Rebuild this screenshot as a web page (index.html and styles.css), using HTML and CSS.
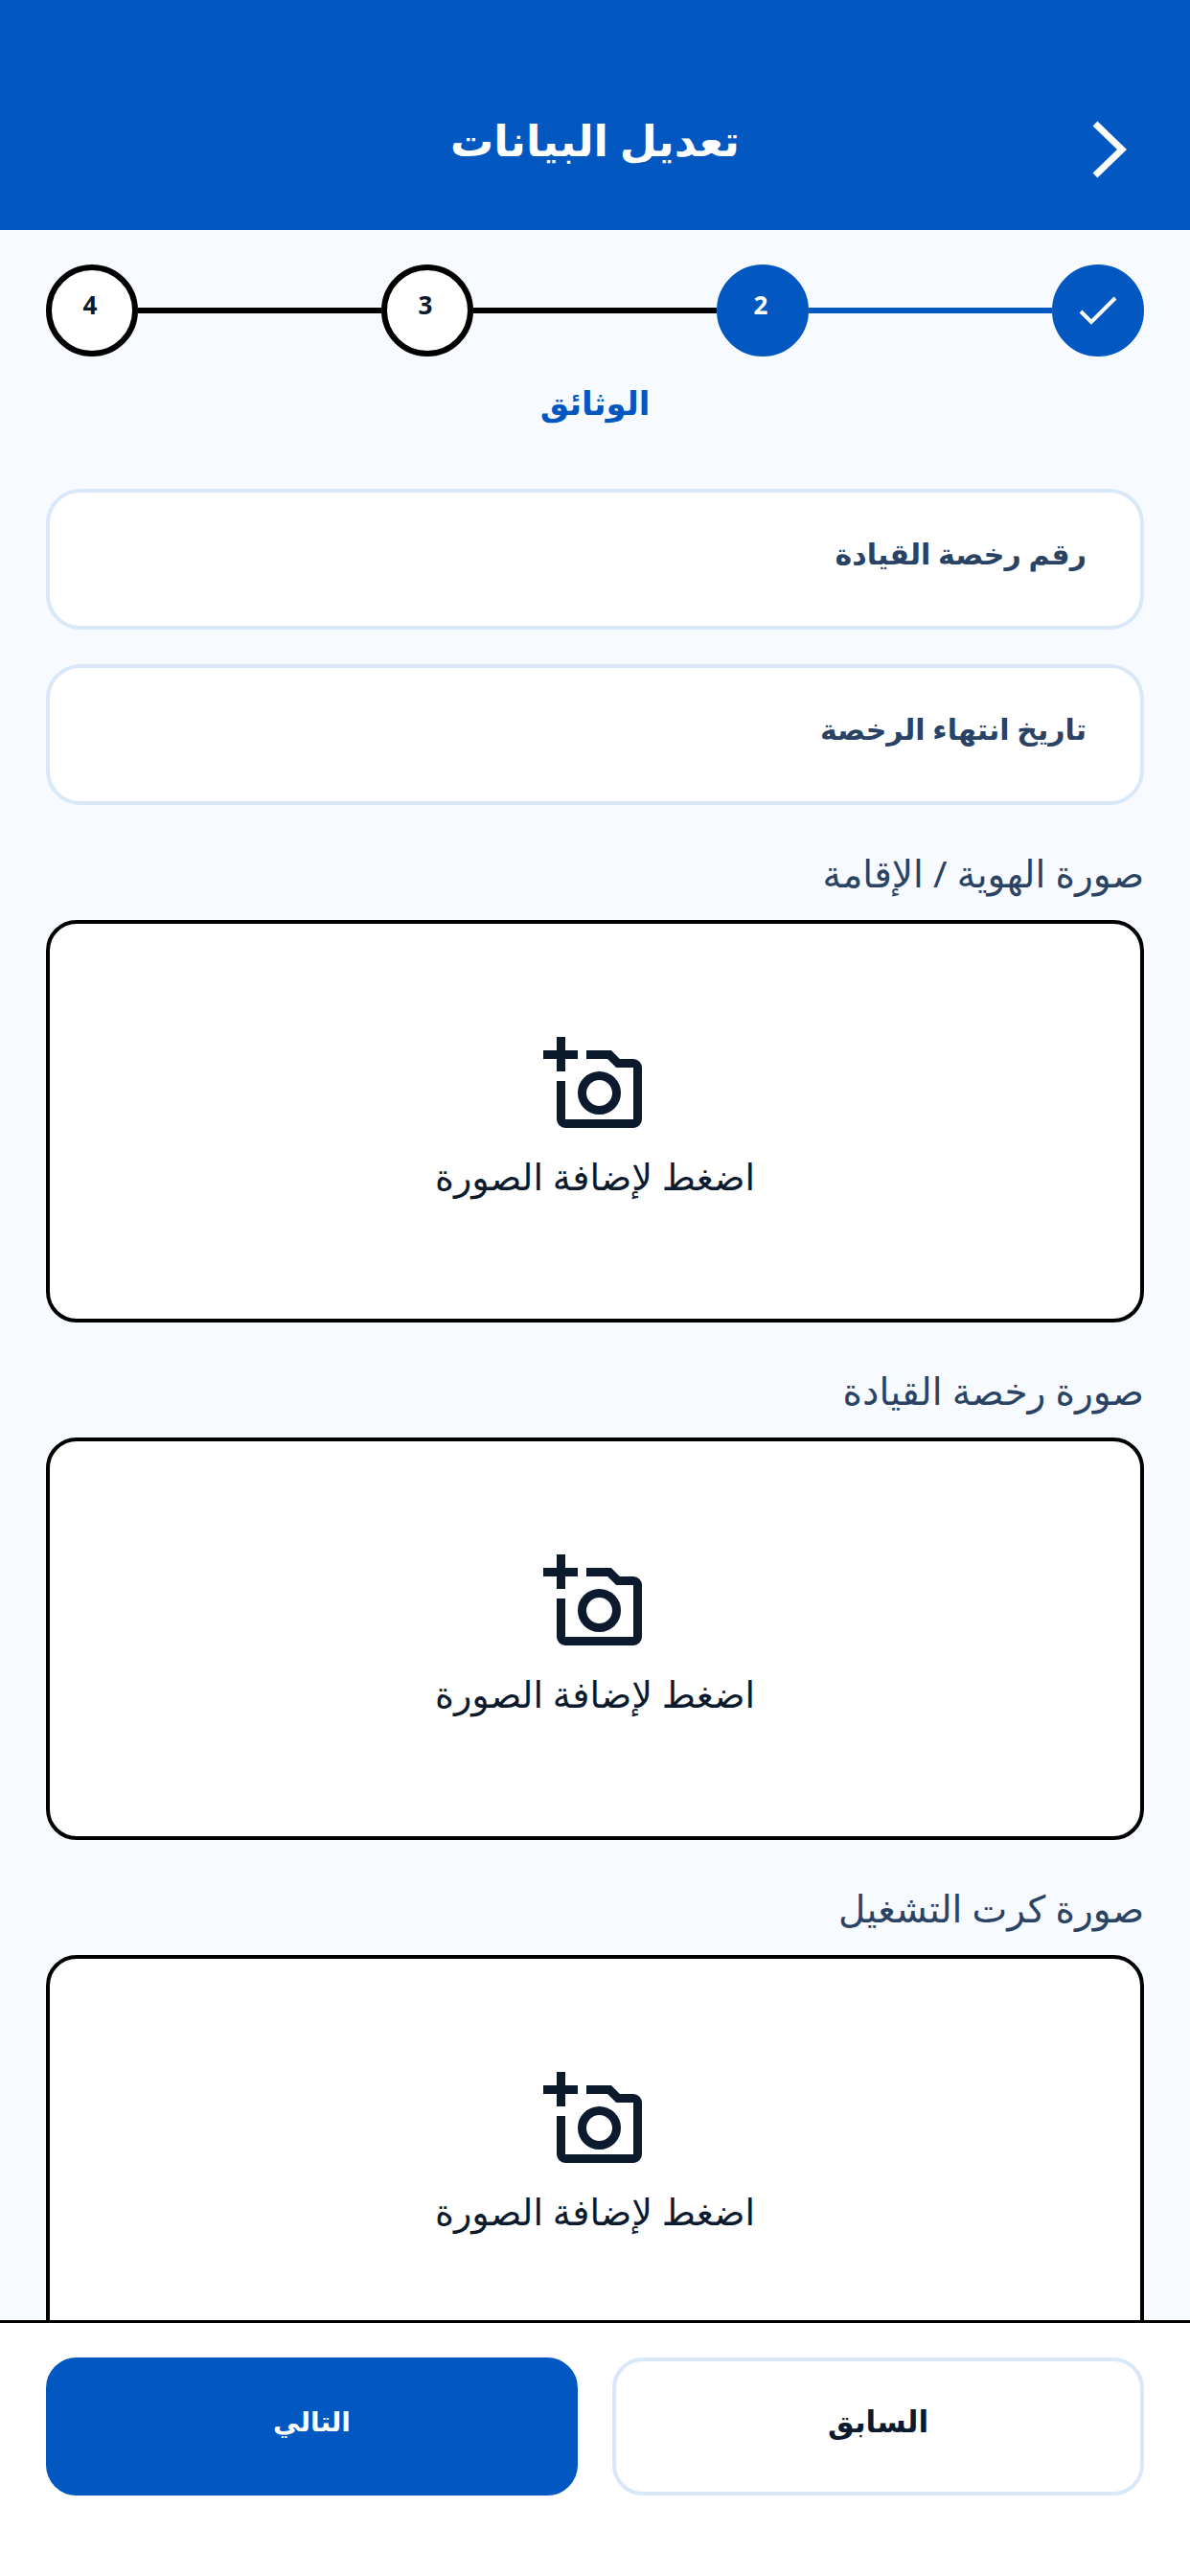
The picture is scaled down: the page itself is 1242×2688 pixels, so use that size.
FILE: index.html
```html
<!DOCTYPE html>
<html lang="ar" dir="rtl">
<head>
  <meta charset="UTF-8" />
  <title>تعديل البيانات</title>
  <link rel="stylesheet" href="styles.css">
</head>
<body>
  <header class="topbar">
    <svg class="back" viewBox="0 0 36 60"><path d="M3 3 L31 30 L3 57" fill="none" stroke="#fff" stroke-width="7"/></svg>
    <h1>تعديل البيانات</h1>
  </header>

  <main class="content">
    <div class="stepper">
      <div class="step done">
        <svg viewBox="0 0 40 30" width="40" height="30"><path d="M2 16 L13 27 L38 2" fill="none" stroke="#fff" stroke-width="4"/></svg>
      </div>
      <div class="line done"></div>
      <div class="step done"><span>2</span></div>
      <div class="line"></div>
      <div class="step"><span>3</span></div>
      <div class="line"></div>
      <div class="step"><span>4</span></div>
    </div>
    <div class="step-name">الوثائق</div>

    <div class="field"><span>رقم رخصة القيادة</span></div>
    <div class="field"><span>تاريخ انتهاء الرخصة</span></div>

    <div class="upload-title">صورة الهوية / الإقامة</div>
    <div class="upload">
      <svg class="cam" viewBox="0 0 103 95"><path d="M0 18.5H36M18.5 0V36M45 18.5H69L78 27.5H94a4.5 4.5 0 0 1 4.5 4.5V86a4.5 4.5 0 0 1-4.5 4.5H23a4.5 4.5 0 0 1-4.5-4.5V46" fill="none" stroke="#0c1a2e" stroke-width="9"/><circle cx="58.5" cy="58.5" r="18" fill="none" stroke="#0c1a2e" stroke-width="9"/></svg>
      <p>اضغط لإضافة الصورة</p>
    </div>

    <div class="upload-title">صورة رخصة القيادة</div>
    <div class="upload">
      <svg class="cam" viewBox="0 0 103 95"><path d="M0 18.5H36M18.5 0V36M45 18.5H69L78 27.5H94a4.5 4.5 0 0 1 4.5 4.5V86a4.5 4.5 0 0 1-4.5 4.5H23a4.5 4.5 0 0 1-4.5-4.5V46" fill="none" stroke="#0c1a2e" stroke-width="9"/><circle cx="58.5" cy="58.5" r="18" fill="none" stroke="#0c1a2e" stroke-width="9"/></svg>
      <p>اضغط لإضافة الصورة</p>
    </div>

    <div class="upload-title">صورة كرت التشغيل</div>
    <div class="upload">
      <svg class="cam" viewBox="0 0 103 95"><path d="M0 18.5H36M18.5 0V36M45 18.5H69L78 27.5H94a4.5 4.5 0 0 1 4.5 4.5V86a4.5 4.5 0 0 1-4.5 4.5H23a4.5 4.5 0 0 1-4.5-4.5V46" fill="none" stroke="#0c1a2e" stroke-width="9"/><circle cx="58.5" cy="58.5" r="18" fill="none" stroke="#0c1a2e" stroke-width="9"/></svg>
      <p>اضغط لإضافة الصورة</p>
    </div>
  </main>

  <footer class="actions">
    <button class="btn">السابق</button>
    <button class="btn primary">التالي</button>
  </footer>
</body>
</html>
```
FILE: styles.css
```css
* {
  box-sizing: border-box;
}

html, body {
  margin: 0;
  height: 2688px;
}

body {
  display: flex;
  flex-direction: column;
  overflow: hidden;
  background: #f7faff;
  font-family: "Noto Sans", "DejaVu Sans", sans-serif;
  color: #0c1a2e;
}

.topbar {
  position: relative;
  height: 240px;
  flex: none;
  background: #0257c1;
  color: #fff;
}

.topbar h1 {
  margin: 0;
  padding-top: 118px;
  font-size: 45px;
  line-height: 56px;
  font-weight: 700;
  text-align: center;
}

.back {
  position: absolute;
  top: 126px;
  right: 66px;
  width: 36px;
  height: 60px;
}

.content {
  flex: 1;
  overflow: hidden;
  padding: 36px 48px 0;
}

.stepper {
  display: flex;
  align-items: center;
}

.step {
  width: 96px;
  height: 96px;
  flex: none;
  display: flex;
  align-items: center;
  justify-content: center;
  border: 6px solid #000;
  border-radius: 50%;
  background: #fff;
  font-size: 26px;
  font-weight: 700;
}

.step span {
  padding-right: 4px;
  padding-bottom: 12px;
}

.step.done {
  border-color: #0257c1;
  background: #0257c1;
  color: #fff;
}

.line {
  flex: 1;
  height: 6px;
  background: #000;
}

.line.done {
  background: #0257c1;
}

.step-name {
  margin-top: 24px;
  text-align: center;
  font-size: 34px;
  line-height: 48px;
  font-weight: 700;
  color: #0257c1;
}

.field {
  height: 147px;
  margin-top: 36px;
  padding: 42px 56px 0;
  background: #fff;
  border: 4px solid #d9e8f9;
  border-radius: 36px;
  font-size: 30px;
  line-height: 44px;
  font-weight: 700;
  color: #2a4365;
}

.step-name + .field {
  margin-top: 66px;
}

.upload-title {
  margin-top: 47px;
  margin-bottom: 25px;
  font-size: 39px;
  line-height: 48px;
  color: #2a4365;
}

.upload {
  height: 420px;
  padding-top: 118px;
  display: flex;
  flex-direction: column;
  align-items: center;
  background: #fff;
  border: 4px solid #000;
  border-radius: 32px;
}

.cam {
  width: 103px;
  height: 95px;
  margin-right: 5px;
}

.upload p {
  margin: 26px 0 0;
  font-size: 38px;
  line-height: 48px;
}

.actions {
  flex: none;
  height: 267px;
  display: flex;
  gap: 36px;
  padding: 36px 48px 0;
  background: #fff;
  border-top: 3px solid #000;
}

.btn {
  flex: 1;
  height: 144px;
  padding: 0 0 12px;
  background: #fff;
  border: 4px solid #d9e8f9;
  border-radius: 32px;
  font-family: inherit;
  font-size: 31px;
  font-weight: 700;
  color: #0c1a2e;
}

.btn.primary {
  background: #0257c1;
  border-color: #0257c1;
  font-size: 28px;
  color: #fff;
}
```
